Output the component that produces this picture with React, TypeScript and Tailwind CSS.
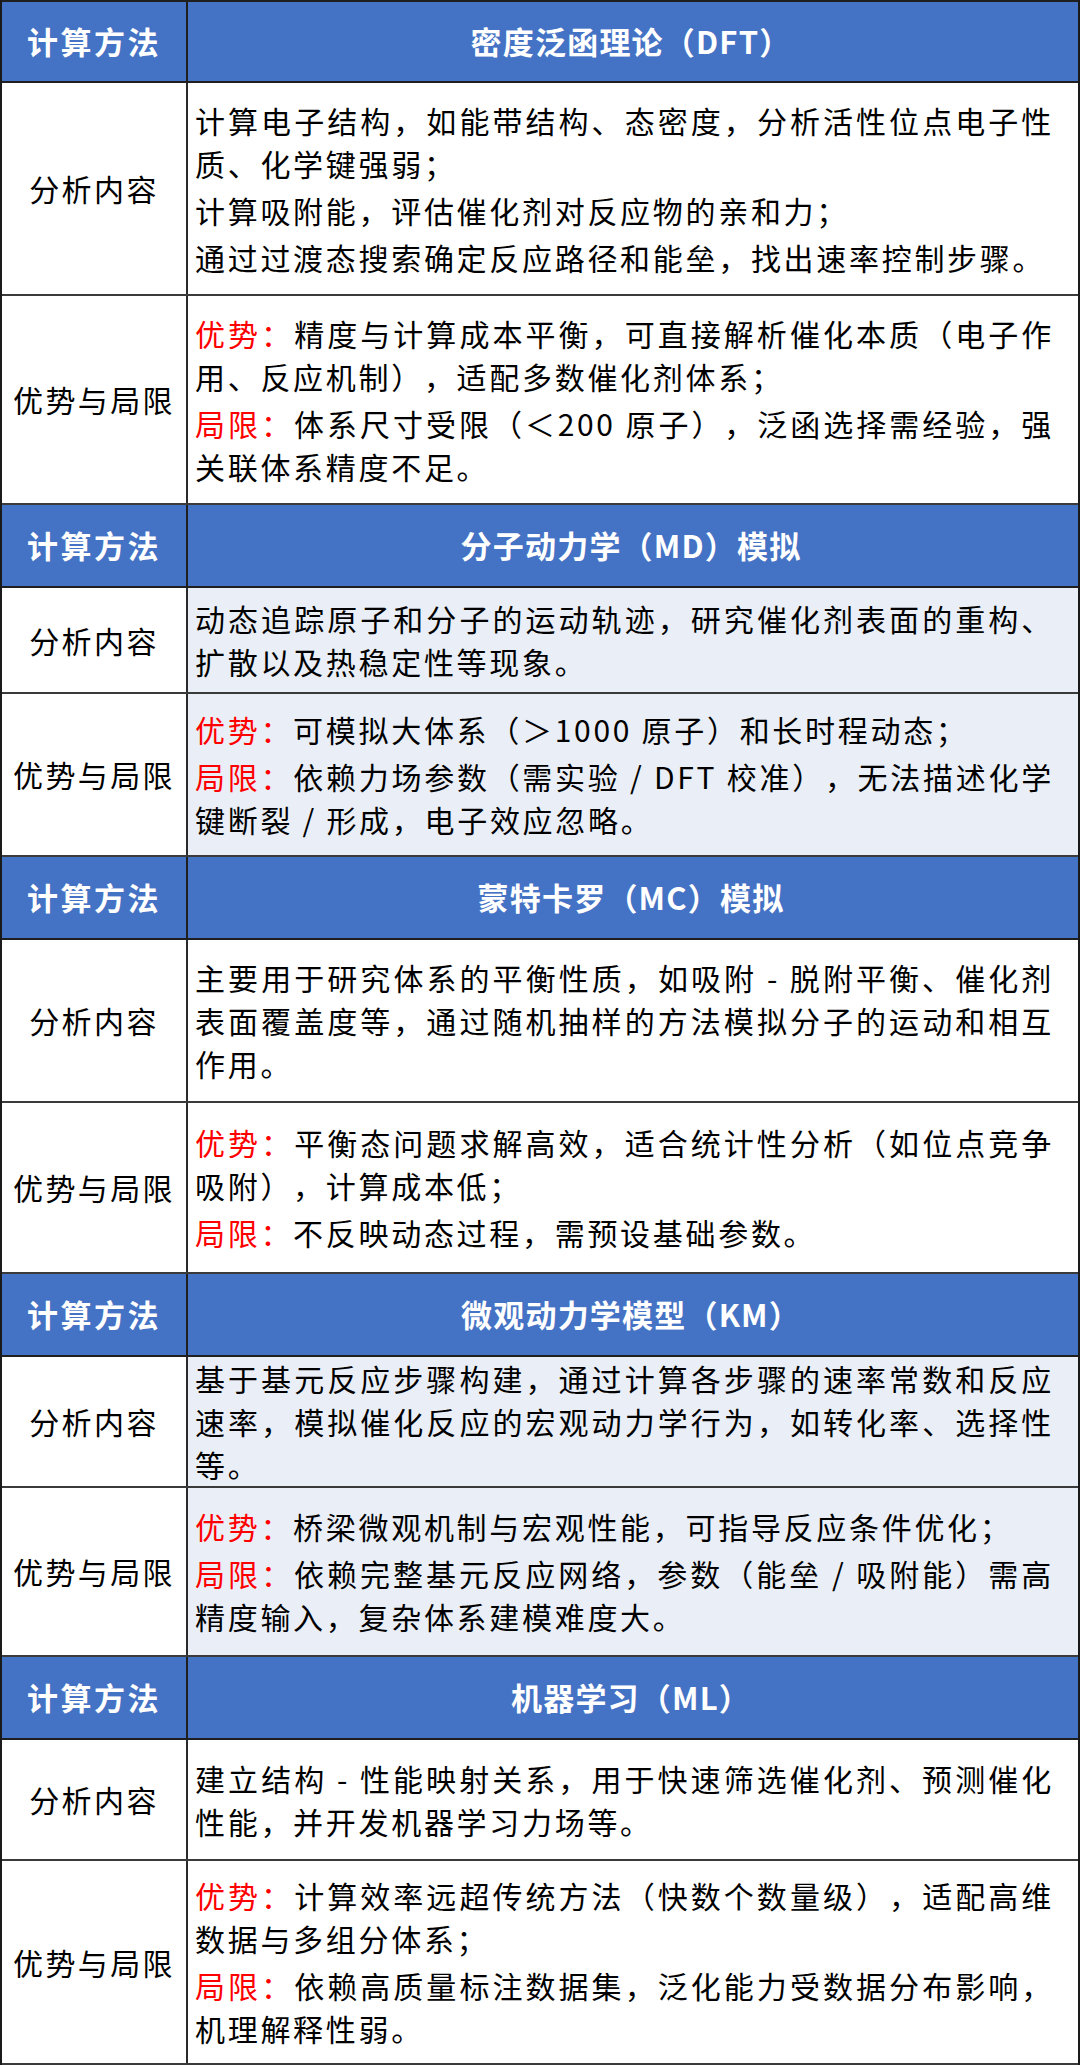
type Para = { label?: "优势：" | "局限："; lines: string[] };

type Section = {
  title: string;
  tint: boolean;
  first?: boolean;
  aH: string;
  bH: string;
  analysis: Para[];
  limits: Para[];
};

const sections: Section[] = [
  {
    title: "密度泛函理论（DFT）",
    tint: false,
    first: true,
    aH: "h-[213px]",
    bH: "h-[209px]",
    analysis: [
      { lines: ["计算电子结构，如能带结构、态密度，分析活性位点电子性", "质、化学键强弱；"] },
      { lines: ["计算吸附能，评估催化剂对反应物的亲和力；"] },
      { lines: ["通过过渡态搜索确定反应路径和能垒，找出速率控制步骤。"] },
    ],
    limits: [
      { label: "优势：", lines: ["精度与计算成本平衡，可直接解析催化本质（电子作", "用、反应机制），适配多数催化剂体系；"] },
      { label: "局限：", lines: ["体系尺寸受限（＜200 原子），泛函选择需经验，强", "关联体系精度不足。"] },
    ],
  },
  {
    title: "分子动力学（MD）模拟",
    tint: true,
    aH: "h-[106px]",
    bH: "h-[163px]",
    analysis: [
      { lines: ["动态追踪原子和分子的运动轨迹，研究催化剂表面的重构、", "扩散以及热稳定性等现象。"] },
    ],
    limits: [
      { label: "优势：", lines: ["可模拟大体系（＞1000 原子）和长时程动态；"] },
      { label: "局限：", lines: ["依赖力场参数（需实验 / DFT 校准），无法描述化学", "键断裂 / 形成，电子效应忽略。"] },
    ],
  },
  {
    title: "蒙特卡罗（MC）模拟",
    tint: false,
    aH: "h-[163px]",
    bH: "h-[171px]",
    analysis: [
      {
        lines: [
          "主要用于研究体系的平衡性质，如吸附 - 脱附平衡、催化剂",
          "表面覆盖度等，通过随机抽样的方法模拟分子的运动和相互",
          "作用。",
        ],
      },
    ],
    limits: [
      { label: "优势：", lines: ["平衡态问题求解高效，适合统计性分析（如位点竞争", "吸附），计算成本低；"] },
      { label: "局限：", lines: ["不反映动态过程，需预设基础参数。"] },
    ],
  },
  {
    title: "微观动力学模型（KM）",
    tint: true,
    aH: "h-[131px]",
    bH: "h-[169px]",
    analysis: [
      {
        lines: [
          "基于基元反应步骤构建，通过计算各步骤的速率常数和反应",
          "速率，模拟催化反应的宏观动力学行为，如转化率、选择性",
          "等。",
        ],
      },
    ],
    limits: [
      { label: "优势：", lines: ["桥梁微观机制与宏观性能，可指导反应条件优化；"] },
      { label: "局限：", lines: ["依赖完整基元反应网络，参数（能垒 / 吸附能）需高", "精度输入，复杂体系建模难度大。"] },
    ],
  },
  {
    title: "机器学习（ML）",
    tint: false,
    aH: "h-[121px]",
    bH: "h-[204px]",
    analysis: [
      { lines: ["建立结构 - 性能映射关系，用于快速筛选催化剂、预测催化", "性能，并开发机器学习力场等。"] },
    ],
    limits: [
      { label: "优势：", lines: ["计算效率远超传统方法（快数个数量级），适配高维", "数据与多组分体系；"] },
      { label: "局限：", lines: ["依赖高质量标注数据集，泛化能力受数据分布影响，", "机理解释性弱。"] },
    ],
  },
];

function Paragraphs({ paras }: { paras: Para[] }) {
  return (
    <div className="flex flex-col gap-[4px]">
      {paras.map((p, i) => (
        <div key={i}>
          {p.lines.map((line, j) => (
            <div
              key={j}
              className={`whitespace-nowrap leading-[43px] ${
                j < p.lines.length - 1 ? "[text-align-last:justify]" : ""
              }`}
            >
              {j === 0 && p.label && <span className="text-[#ff0000]">{p.label}</span>}
              {line}
            </div>
          ))}
        </div>
      ))}
    </div>
  );
}

function BodyRow({
  label,
  height,
  tint,
  paras,
}: {
  label: string;
  height: string;
  tint: boolean;
  paras: Para[];
}) {
  return (
    <div className={`flex border-b-2 border-[#3a3a3a] ${height}`}>
      <div className="w-[186px] shrink-0 border-r-2 border-[#2a2a2a] bg-white flex items-center justify-center tracking-[2.4px]">
        {label}
      </div>
      <div
        className={`flex-1 flex flex-col justify-center pl-[7px] pr-[24px] tracking-[2.7px] ${
          tint ? "bg-[#eaeff7]" : "bg-white"
        }`}
      >
        <Paragraphs paras={paras} />
      </div>
    </div>
  );
}

export default function App() {
  return (
    <div className="w-[1080px] h-[2065px] bg-white font-['Noto_Sans_CJK_SC','Noto_Sans',sans-serif] text-[30px] text-black [text-spacing-trim:space-all]">
      <div className="flex flex-col border-x-2 border-[#1a1a1a]">
        {sections.map((s) => (
          <div key={s.title} className="flex flex-col">
            {/* Header */}
            <div
              className={`flex h-[83px] bg-[#4472c4] text-white text-[31px] font-bold border-b-2 border-[#1f1f1f] ${
                s.first ? "border-t-2" : ""
              }`}
            >
              <div className="w-[186px] shrink-0 border-r-2 border-[#1f1f1f] flex items-center justify-center tracking-[2.5px]">
                计算方法
              </div>
              <div className="flex-1 flex items-center justify-center pr-[4px] tracking-[1.2px]">
                {s.title}
              </div>
            </div>
            <BodyRow label="分析内容" height={s.aH} tint={s.tint} paras={s.analysis} />
            <BodyRow label="优势与局限" height={s.bH} tint={s.tint} paras={s.limits} />
          </div>
        ))}
      </div>
    </div>
  );
}
